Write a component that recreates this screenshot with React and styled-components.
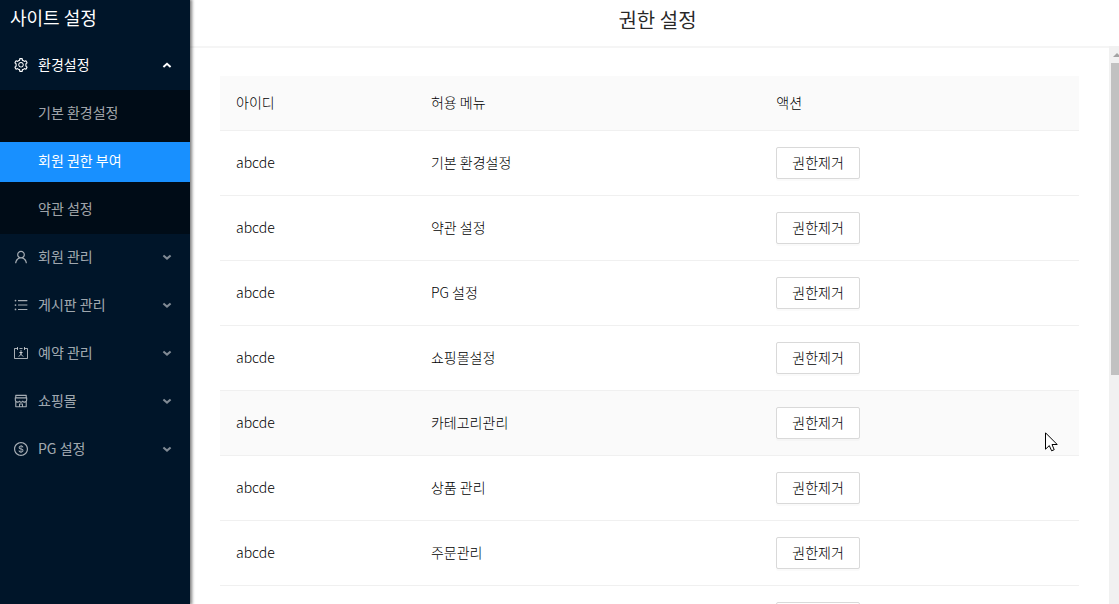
import React, { useState } from 'react';
import styled, { createGlobalStyle, css } from 'styled-components';
import {
  AiOutlineSetting,
  AiOutlineUser,
  AiOutlineUnorderedList,
  AiOutlineShop,
  AiOutlineDollar,
} from 'react-icons/ai';

const GlobalStyle = createGlobalStyle`
  * {
    box-sizing: border-box;
  }

  body {
    margin: 0;
    font-family: "Noto Sans CJK KR", "Noto Sans", sans-serif;
    font-size: 14px;
    line-height: 22px;
    color: rgba(0, 0, 0, 0.85);
    background: #fff;
  }
`;

/**
 * layout
 */
const PageWrap = styled.div`
  position: relative;
  display: flex;
  height: 100vh;
  overflow: hidden;
`;

const Sidebar = styled.aside`
  flex: 0 0 190px;
  background: #001529;
  box-shadow: 1px 0 3px 1px rgba(0, 0, 0, 0.5);
  z-index: 1;
`;

const SiteTitle = styled.h1`
  height: 42px;
  margin: 0;
  padding: 3px 10px;
  font-size: 18px;
  font-weight: 400;
  line-height: 28px;
  color: #fff;
`;

const Main = styled.main`
  display: flex;
  flex: 1;
  flex-direction: column;
  min-width: 0;
`;

const MainHeader = styled.header`
  flex: 0 0 46px;
  padding: 5px 0 0 6px;
  text-align: center;

  h2 {
    margin: 0;
    font-size: 20px;
    font-weight: 400;
    line-height: 30px;
  }
`;

const MainBody = styled.div`
  display: flex;
  flex: 1;
  min-height: 0;
`;

const Content = styled.section`
  flex: 1;
  min-width: 0;
  padding: 28px 30px;
  border-top: 2px solid #f5f5f5;
  overflow: hidden;
`;

/**
 * side menu
 */
const MenuList = styled.ul`
  margin: 0;
  padding: 0;
  list-style: none;
`;

const MenuButton = styled.button`
  display: flex;
  align-items: center;
  gap: 9px;
  width: 100%;
  height: 48px;
  padding: 0 18px 2px 13px;
  border: 0;
  background: transparent;
  font: inherit;
  text-align: left;
  color: ${({ $open }) => ($open ? '#fff' : 'rgba(255, 255, 255, 0.65)')};
  cursor: pointer;

  span {
    flex: 1;
    padding-bottom: 2px;
  }
`;

const MenuArrow = styled.svg`
  color: ${({ $open }) => ($open ? '#fff' : 'rgba(255, 255, 255, 0.5)')};
`;

const SubMenuList = styled(MenuList)`
  background: #000c17;
`;

const SubMenuLink = styled.a`
  display: block;
  height: 40px;
  padding-left: 38px;
  line-height: 36px;
  color: rgba(255, 255, 255, 0.65);
  text-decoration: none;

  ${({ $active }) =>
    $active &&
    css`
      background: #1890ff;
      color: #fff;
    `}
`;

const SubMenuItem = styled.li`
  padding: 4px 0;
`;

/**
 * table
 */
const AuthTable = styled.table`
  width: 100%;
  border-collapse: separate;
  border-spacing: 0;
  table-layout: fixed;
  font-weight: 300;
  color: #000;

  th,
  td {
    padding: 15px 16px 17px;
    border-bottom: 1px solid #f0f0f0;
    font-weight: 300;
    text-align: left;
  }

  td:last-child {
    padding: 16px;
  }

  th {
    background: #fafafa;
  }

  th:nth-child(1) {
    width: 22.7%;
  }

  th:nth-child(2) {
    width: 40.2%;
  }
`;

const BodyRow = styled.tr`
  background: ${({ $hover }) => ($hover ? '#fafafa' : '#fff')};
`;

const RemoveButton = styled.button`
  display: block;
  height: 32px;
  padding: 0 15px 2px;
  border: 1px solid #d9d9d9;
  border-radius: 2px;
  background: #fff;
  box-shadow: 0 2px 0 rgba(0, 0, 0, 0.02);
  font: inherit;
  color: #000;
  cursor: pointer;
`;

/**
 * scroll bar
 */
const ScrollTrack = styled.div`
  flex: 0 0 10px;
  padding-left: 2px;
  background: #f1f1f1;
  overflow: hidden;
`;

const ScrollArrow = styled.div`
  height: 17px;
  padding: 6px 0 0 2px;

  svg {
    display: block;
  }
`;

const ScrollThumb = styled.div`
  height: 56%;
  background: #c1c1c1;
`;

const Pointer = styled.svg`
  position: absolute;
  top: 432px;
  right: 61px;
`;

function ReserveIcon({ size }) {
  return (
    <svg width={size} height={size} viewBox="0 0 16 16" fill="none" stroke="currentColor">
      <path d="M4.500 3.500h-3v10h13v-10h-3M6.500 3.500h3M4.500 2v3M11.500 2v3" />
      <path d="M8 5v3M6.300 7.500h3.400M8 7.500c0 2-.8 3.300-2.400 4M8 8c.2 1.800 1 3 2.400 3.500" />
    </svg>
  );
}

function Arrow({ open }) {
  return (
    <MenuArrow
      $open={open}
      width="10"
      height="10"
      viewBox="0 0 10 10"
      fill="none"
      stroke="currentColor"
      strokeWidth="2"
    >
      <path d={open ? 'M1.4 7L5 3.8L8.6 7' : 'M1.4 3.4L5 6.6L8.6 3.4'} />
    </MenuArrow>
  );
}

const MENUS = [
  {
    title: '환경설정',
    icon: AiOutlineSetting,
    children: ['기본 환경설정', '회원 권한 부여', '약관 설정'],
  },
  { title: '회원 관리', icon: AiOutlineUser },
  { title: '게시판 관리', icon: AiOutlineUnorderedList },
  { title: '예약 관리', icon: ReserveIcon },
  { title: '쇼핑몰', icon: AiOutlineShop },
  { title: 'PG 설정', icon: AiOutlineDollar },
];

const ROWS = [
  '기본 환경설정',
  '약관 설정',
  'PG 설정',
  '쇼핑몰설정',
  '카테고리관리',
  '상품 관리',
  '주문관리',
  '회원 관리',
];

function SideMenu() {
  const [openMenu, setOpenMenu] = useState('환경설정');
  const [active, setActive] = useState('회원 권한 부여');

  return (
    <MenuList>
      {MENUS.map(({ title, icon: MenuIcon, children }) => {
        const open = openMenu === title;

        return (
          <li key={title}>
            <MenuButton
              type="button"
              $open={open}
              aria-expanded={open}
              onClick={() => setOpenMenu(open ? '' : title)}
            >
              <MenuIcon size={16} />
              <span>{title}</span>
              <Arrow open={open} />
            </MenuButton>

            {open && children && (
              <SubMenuList>
                {children.map((name) => (
                  <SubMenuItem key={name}>
                    <SubMenuLink href="#" $active={active === name} onClick={() => setActive(name)}>
                      {name}
                    </SubMenuLink>
                  </SubMenuItem>
                ))}
              </SubMenuList>
            )}
          </li>
        );
      })}
    </MenuList>
  );
}

function App() {
  const [hoverRow, setHoverRow] = useState(4);

  return (
    <PageWrap>
      <GlobalStyle />

      {/* sidebar */}
      <Sidebar>
        <SiteTitle>사이트 설정</SiteTitle>
        <SideMenu />
      </Sidebar>

      {/* main */}
      <Main>
        <MainHeader>
          <h2>권한 설정</h2>
        </MainHeader>

        <MainBody>
          <Content>
            <AuthTable>
              <thead>
                <tr>
                  <th>아이디</th>
                  <th>허용 메뉴</th>
                  <th>액션</th>
                </tr>
              </thead>
              <tbody>
                {ROWS.map((menu, i) => (
                  <BodyRow key={menu} $hover={hoverRow === i} onMouseEnter={() => setHoverRow(i)}>
                    <td>abcde</td>
                    <td>{menu}</td>
                    <td>
                      <RemoveButton type="button">권한제거</RemoveButton>
                    </td>
                  </BodyRow>
                ))}
              </tbody>
            </AuthTable>
          </Content>

          <ScrollTrack>
            <ScrollArrow>
              <svg width="8" height="6" viewBox="0 0 8 6">
                <path d="M0 5L4 1L8 5Z" fill="#a3a3a3" />
              </svg>
            </ScrollArrow>
            <ScrollThumb />
          </ScrollTrack>
        </MainBody>
      </Main>

      <Pointer width="13" height="20" viewBox="0 0 13 20">
        <path
          d="M.5 .8V17.2L4.3 13.6L6.6 18.8L9.2 17.7L7 12.5H12.2Z"
          fill="#fff"
          stroke="#000"
        />
      </Pointer>
    </PageWrap>
  );
}

export default App;
